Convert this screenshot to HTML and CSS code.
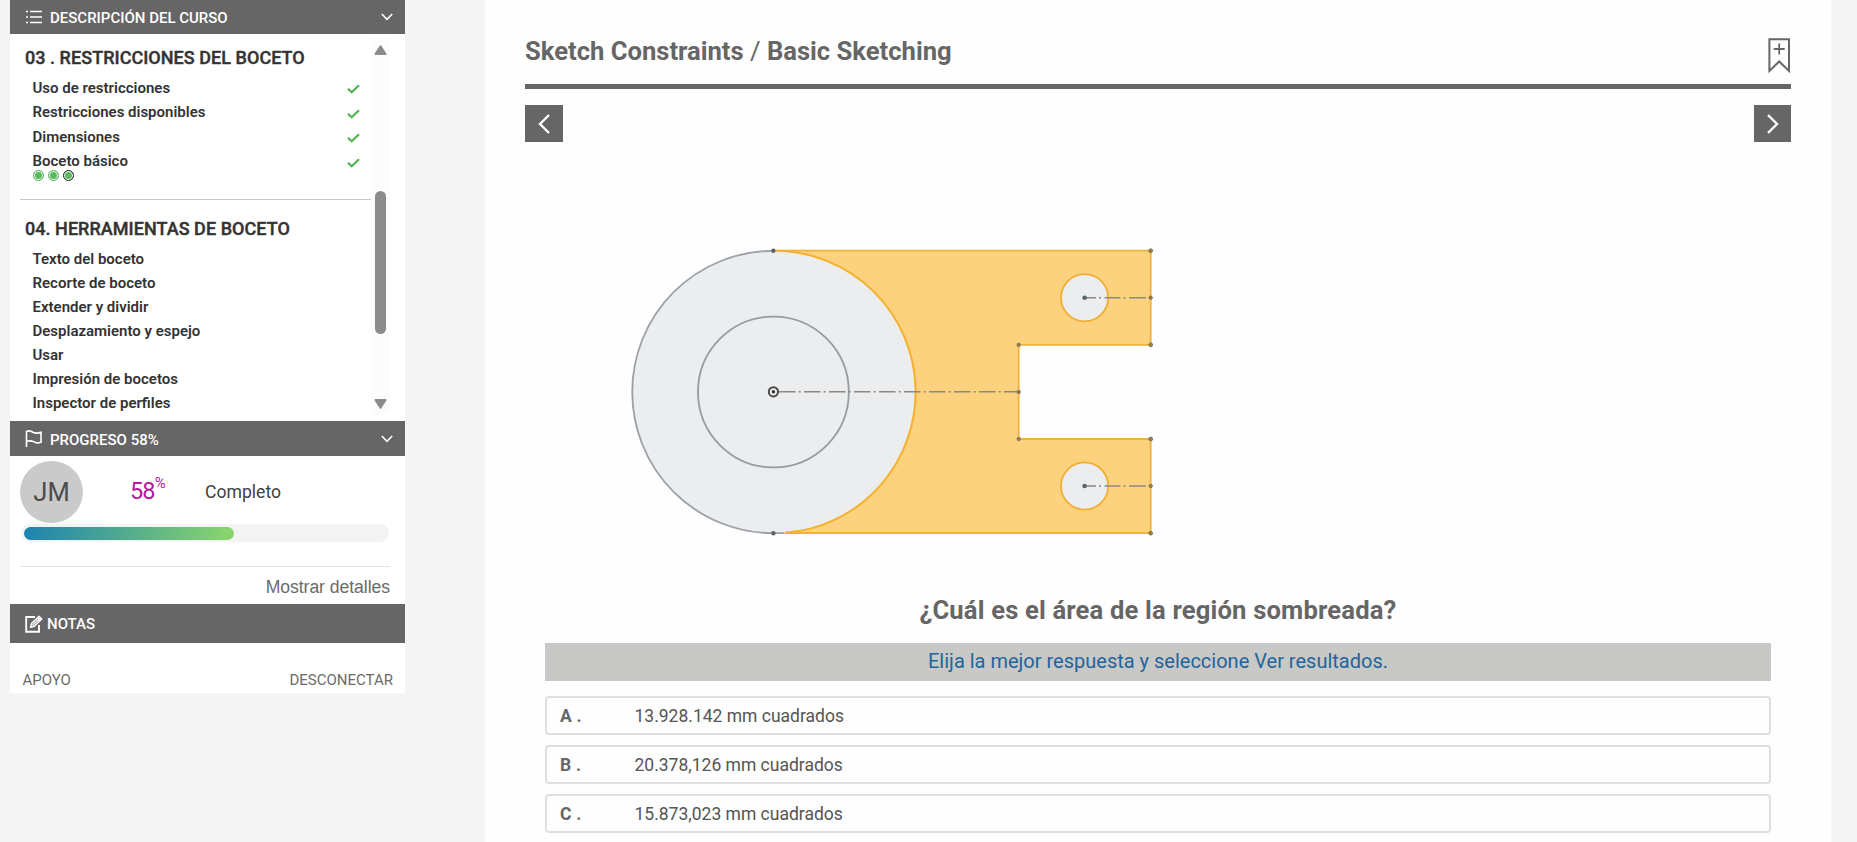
FILE: index.html
```html
<!DOCTYPE html>
<html lang="es">
<head>
<meta charset="utf-8">
<title>Sketch Constraints / Basic Sketching</title>
<link rel="stylesheet" href="styles.css">
</head>
<body>
<div class="page">
  <aside class="sidebar">
    <header class="bar bar-course">
      <svg class="ico" width="18" height="16" viewBox="0 0 18 16"><path d="M5 2.5h12M5 8h12M5 13.5h12M1 2.5h2M1 8h2M1 13.5h2" fill="none" stroke="#fff" stroke-width="1.5"/></svg>
      <span class="bar-title t-course">DESCRIPCIÓN DEL CURSO</span>
      <svg class="chev" width="12" height="8" viewBox="0 0 12 8"><path d="M.8 1l5.2 5.3L11.200 1" fill="none" stroke="#fff" stroke-width="1.6"/></svg>
    </header>
    <div class="outline">
      <div class="chapters">
        <section class="chapter first">
          <h2 class="h-03">03 . RESTRICCIONES DEL BOCETO</h2>
          <ul class="done">
            <li><span>Uso de restricciones</span><svg width="13" height="10" viewBox="0 0 13 10"><path d="M1 4.700L4.700 8.300L12 1.200" fill="none" stroke="#4fb457" stroke-width="2.200"/></svg></li>
            <li><span>Restricciones disponibles</span><svg width="13" height="10" viewBox="0 0 13 10"><path d="M1 4.700L4.700 8.300L12 1.200" fill="none" stroke="#4fb457" stroke-width="2.200"/></svg></li>
            <li><span>Dimensiones</span><svg width="13" height="10" viewBox="0 0 13 10"><path d="M1 4.700L4.700 8.300L12 1.200" fill="none" stroke="#4fb457" stroke-width="2.200"/></svg></li>
            <li><span>Boceto básico</span><svg width="13" height="10" viewBox="0 0 13 10"><path d="M1 4.700L4.700 8.300L12 1.200" fill="none" stroke="#4fb457" stroke-width="2.200"/></svg></li>
          </ul>
          <div class="dots"><i></i><i></i><i class="current"></i></div>
        </section>
        <section class="chapter">
          <h2 class="h-04">04. HERRAMIENTAS DE BOCETO</h2>
          <ul>
            <li><span>Texto del boceto</span></li>
            <li><span>Recorte de boceto</span></li>
            <li><span>Extender y dividir</span></li>
            <li><span>Desplazamiento y espejo</span></li>
            <li><span>Usar</span></li>
            <li><span>Impresión de bocetos</span></li>
            <li><span>Inspector de perfiles</span></li>
          </ul>
        </section>
      </div>
      <div class="scroll">
        <svg width="13" height="10" viewBox="0 0 13 10"><path d="M6.500 1.200L11.500 9H1.500Z" fill="#8b8b8b" stroke="#8b8b8b" stroke-width="2" stroke-linejoin="round"/></svg>
        <div class="thumb"></div>
        <svg width="13" height="10" viewBox="0 0 13 10"><path d="M6.500 8.800L11.500 1H1.500Z" fill="#8b8b8b" stroke="#8b8b8b" stroke-width="2" stroke-linejoin="round"/></svg>
      </div>
    </div>
    <header class="bar bar-progress">
      <svg class="ico" width="18" height="17" viewBox="0 0 18 17"><path d="M1.500 17V1.500C5-.2 6 1.500 8.500 2.600S13 3.200 16 2.300V12.200C12.500 13.500 10.500 13 8.500 11.700S5 10.500 1.500 11.300" fill="none" stroke="#fff" stroke-width="1.600"/></svg>
      <span class="bar-title t-progress">PROGRESO 58%</span>
      <svg class="chev" width="12" height="8" viewBox="0 0 12 8"><path d="M.8 1l5.2 5.3L11.200 1" fill="none" stroke="#fff" stroke-width="1.6"/></svg>
    </header>
    <div class="progress">
      <div class="summary">
        <div class="avatar">JM</div>
        <div class="pct">58<sup>%</sup></div>
        <div class="state">Completo</div>
      </div>
      <div class="track"><div class="fill"></div></div>
      <div class="details"><span>Mostrar detalles</span></div>
    </div>
    <header class="bar bar-notes">
      <svg class="ico" width="18" height="18" viewBox="0 0 18 18"><path d="M10 2H1.200V16.800H14V10" fill="none" stroke="#fff" stroke-width="1.900"/><path d="M5.500 12.300L6.500 8.500L14 1.300L16.800 4L9.300 11.300ZM7.500 10.300L14.800 3.200M12.500 2.800L15.200 5.500" fill="none" stroke="#fff" stroke-width="1.400" stroke-linejoin="round"/></svg>
      <span class="bar-title t-notes">NOTAS</span>
    </header>
    <footer class="links"><span class="help">APOYO</span><span class="logout">DESCONECTAR</span></footer>
  </aside>
  <main class="content">
    <div class="head">
      <h1>Sketch Constraints <span>/</span> Basic Sketching</h1>
      <svg width="23" height="36" viewBox="0 0 23 36"><path d="M1.400 1.200H21V33L11.200 23.500L1.400 33Z" fill="none" stroke="#666" stroke-width="2"/><path d="M11.200 5.500V16.500M5.700 11H16.700" stroke="#666" stroke-width="1.800"/></svg>
    </div>
    <nav class="pager">
      <button class="prev"><svg width="12" height="20" viewBox="0 0 12 20"><path d="M11 1L2 10L11 19" fill="none" stroke="#fff" stroke-width="2.400"/></svg></button>
      <button class="next"><svg width="12" height="20" viewBox="0 0 12 20"><path d="M1 1L10 10L1 19" fill="none" stroke="#fff" stroke-width="2.400"/></svg></button>
    </nav>
    <svg class="drawing" width="1226" height="438" viewBox="545 142 1226 438">
      <path d="M773.400 250.700H1150.700V344.800H1018.700V439H1150.700V533H773.400Z" fill="#fcd27e" stroke="#f0b23a" stroke-width="1.800"/>
      <circle cx="773.400" cy="392" r="141.200" fill="#ebedef"/>
      <path d="M773.400 250.800A141.200 141.200 0 0 0 773.400 533.200H784" fill="none" stroke="#9ba1a6" stroke-width="1.800"/>
      <path d="M776 250.800A141.200 141.200 0 0 1 785 532.800" fill="none" stroke="#f5b02e" stroke-width="1.900"/>
      <circle cx="773.400" cy="392" r="75.400" fill="none" stroke="#979ca1" stroke-width="1.800"/>
      <g fill="#ebedef" stroke="#f2ae32" stroke-width="1.800"><circle cx="1084.600" cy="297.700" r="23.600"/><circle cx="1084.600" cy="486" r="23.600"/></g>
      <g fill="none" stroke="#8a8983" stroke-width="1.600"><path d="M779 391.800H1018" stroke-dasharray="16.500 3.200 2 3.300"/><path d="M1085 297.700H1150M1085 486H1150" stroke-dasharray="11 3 2 3.500 16 3 2 3.500 17 3"/></g>
      <circle cx="773.400" cy="391.800" r="4.600" fill="#eef0f1" stroke="#4a4a4a" stroke-width="2"/><circle cx="773.400" cy="391.800" r="1.700" fill="#333"/>
      <g fill="#59646b"><circle cx="773.400" cy="250.700" r="2.200"/><circle cx="773.400" cy="533.200" r="2.200"/><circle cx="1084.600" cy="297.700" r="2.300"/><circle cx="1084.600" cy="486" r="2.300"/></g>
      <g fill="#a0803a" stroke="#7b6f52" stroke-width=".9"><circle cx="1150.700" cy="250.700" r="1.900"/><circle cx="1150.700" cy="297.700" r="1.700"/><circle cx="1150.700" cy="344.800" r="1.900"/><circle cx="1018.700" cy="344.800" r="1.700"/><circle cx="1018.700" cy="392" r="1.700"/><circle cx="1018.700" cy="439" r="1.700"/><circle cx="1150.700" cy="439" r="1.900"/><circle cx="1150.700" cy="486" r="1.700"/><circle cx="1150.700" cy="533.200" r="1.900"/></g>
    </svg>
    <section class="quiz">
      <h3>¿Cuál es el área de la región sombreada?</h3>
      <p class="hint">Elija la mejor respuesta y seleccione Ver resultados.</p>
      <div class="option"><b>A .</b><span>13.928.142 mm cuadrados</span></div>
      <div class="option"><b>B .</b><span>20.378,126 mm cuadrados</span></div>
      <div class="option"><b>C .</b><span>15.873,023 mm cuadrados</span></div>
    </section>
  </main>
</div>
</body>
</html>
```
FILE: styles.css
```css
* { box-sizing: border-box; }
body { margin: 0; background: #f4f4f4; font-family: Roboto, "Liberation Sans", sans-serif; overflow: hidden; }
h1, h2, h3, p, ul { margin: 0; padding: 0; }
svg { display: block; flex: none; }
span, h1, h2, h3 { white-space: nowrap; }
.page { display: flex; align-items: flex-start; gap: 80px; height: 842px; padding-left: 10px; }

.sidebar { width: 395px; height: 693px; flex: none; background: #fff; }
.bar { display: flex; align-items: center; background: #666; color: #fff; padding: 0 12px 0 15px; }
.bar-title { font-size: 15px; line-height: 20px; font-weight: 500; margin: 2px 0 0 7px; }
.chev { margin-left: auto; }
.bar-course { height: 34px; }
.bar-progress { height: 35px; }
.bar-notes { height: 39px; }
.t-notes { margin: 0 0 0 4px; }

.outline { display: flex; height: 387px; padding-left: 10px; }
.chapters { width: 351px; height: 387px; overflow: hidden; color: #333; }
.chapter { padding: 16px 0 0 5px; }
.chapter.first { padding-top: 11px; height: 166px; border-bottom: 1px solid #c8c8c8; }
.chapter h2 { font-size: 18px; line-height: 26px; font-weight: 500; letter-spacing: .04px; -webkit-text-stroke: .4px; }
.chapter ul { list-style: none; padding: 5px 11px 0 7.500px; }
.chapter ul.done { padding-top: 5px; }
.chapter li { display: flex; justify-content: space-between; align-items: center; height: 24px; font-size: 15px; font-weight: 600; }
.done li { height: 24.500px; }
.done li span { margin-top: -1px; }
.done li svg { margin-top: 2px; }
.dots { display: flex; gap: 4px; padding-left: 8px; margin-top: -4px; }
.dots i { width: 11px; height: 11px; border: 1px solid #5cb860; border-radius: 50%; background: #5cb860; box-shadow: inset 0 0 0 1px #fff; }
.dots i.current { border-color: #222; }
.scroll { display: flex; flex-direction: column; align-items: center; width: 19px; height: 375px; margin-top: 5px; padding: 6px 0 5px; background: #fcfcfc; }
.thumb { width: 11px; height: 143px; margin: 136px 0 auto; border-radius: 6px; background: #8b8b8b; }

.progress { height: 148px; padding: 5px 15px 0 10px; }
.summary { display: flex; height: 63px; }
.avatar { width: 63px; height: 62px; border-radius: 50%; background: #cacaca; color: #4c4c4c; font-size: 25.500px; line-height: 63px; text-align: center; }
.pct { display: flex; width: 75px; margin-left: 47px; color: #b5179e; font-size: 23.500px; line-height: 61px; letter-spacing: -.9px; }
.pct sup { font-size: 15px; line-height: 45px; vertical-align: baseline; }
.state { color: #414042; font-size: 17.600px; line-height: 62px; }
.track { width: 368px; height: 18px; margin-left: 1px; padding: 3px; border-radius: 9px; background: #f4f4f4; }
.fill { width: 210px; height: 13px; border-radius: 7px; background: linear-gradient(90deg, #1c83b0, #8bd66c); }
.details { margin-top: 24px; padding-top: 8px; border-top: 1px solid #e5e5e5; color: #6b6b6b; font-size: 17.600px; line-height: 24px; text-align: right; letter-spacing: -.05px; font-family: "Liberation Sans", Arial, sans-serif; }
.links { display: flex; justify-content: space-between; padding: 27px 12px 0 12.500px; color: #6b6b6b; font-size: 15px; line-height: 20px; }

.content { width: 1346px; height: 842px; padding: 0 40px; background: #fefefe; color: #666; }
.head { display: flex; justify-content: space-between; height: 89px; border-bottom: 5px solid #666; }
.head h1 { margin-top: 34px; font-size: 25.600px; line-height: 34px; font-weight: 700; }
.head h1 span { font-weight: 400; }
.head svg { margin-top: 38px; }
.pager { display: flex; justify-content: space-between; height: 53px; padding-top: 16px; }
.pager button { display: flex; align-items: center; justify-content: center; width: 38px; height: 37px; padding: 0; border: 0; background: #666; }
.pager .next { width: 37px; }
.drawing { margin-left: 20px; }
.quiz { padding: 0 20px; }
.quiz h3 { height: 63px; padding-top: 12px; font-size: 25.600px; line-height: 36px; letter-spacing: .17px; text-align: center; }
.hint { height: 38px; margin-bottom: 15px; background: #c8c8c6; color: #22659c; font-size: 20px; line-height: 37px; text-align: center; }
.option { display: flex; align-items: center; height: 39px; margin-bottom: 10px; padding-left: 13px; border: 2px solid #dfdfdf; border-radius: 4px; font-size: 17.500px; }
.option b { width: 74.500px; letter-spacing: .2px; }
.option span { color: #555; }
```
